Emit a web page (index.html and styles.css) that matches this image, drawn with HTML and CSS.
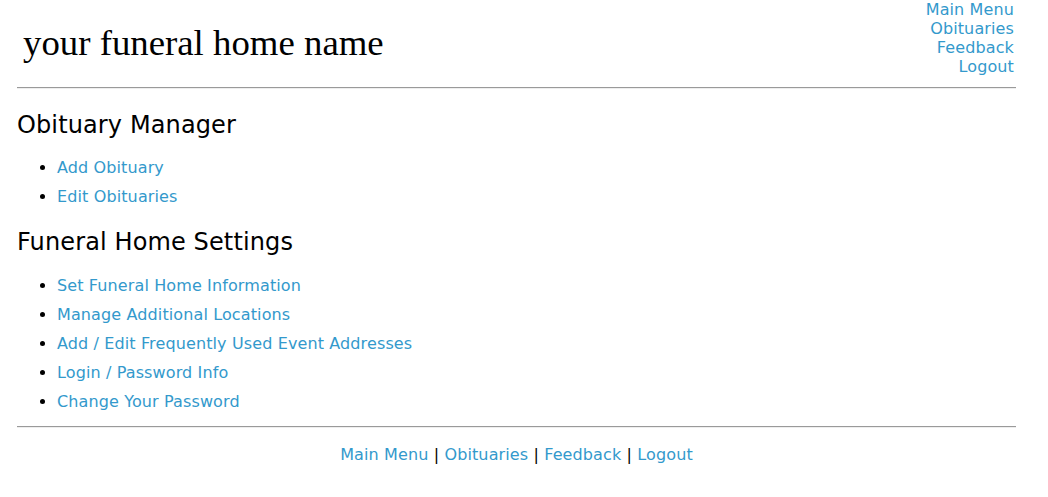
FILE: index.html
```html
<!DOCTYPE html>
<html>
<head>
<meta charset="utf-8">
<title>Obituary Manager</title>
<link rel="stylesheet" href="styles.css">
</head>
<body>
<div class="page">
  <header class="header">
    <div class="brand">your funeral home name</div>
    <nav class="topnav">
      <a href="#">Main Menu</a>
      <a href="#">Obituaries</a>
      <a href="#">Feedback</a>
      <a href="#">Logout</a>
    </nav>
  </header>
  <hr class="rule rule-top">
  <main>
    <h2 class="section-title first">Obituary Manager</h2>
    <ul class="menu first-menu">
      <li><a href="#">Add Obituary</a></li>
      <li><a href="#">Edit Obituaries</a></li>
    </ul>
    <h2 class="section-title second">Funeral Home Settings</h2>
    <ul class="menu second-menu">
      <li><a href="#">Set Funeral Home Information</a></li>
      <li><a href="#">Manage Additional Locations</a></li>
      <li><a href="#">Add / Edit Frequently Used Event Addresses</a></li>
      <li><a href="#">Login / Password Info</a></li>
      <li><a href="#">Change Your Password</a></li>
    </ul>
  </main>
  <hr class="rule rule-bottom">
  <footer class="footer">
    <a href="#">Main Menu</a> | <a href="#">Obituaries</a> | <a href="#">Feedback</a> | <a href="#">Logout</a>
  </footer>
</div>
</body>
</html>
```
FILE: styles.css
```css
html, body {
  margin: 0;
  padding: 0;
  background: #fff;
}
body {
  font-family: "DejaVu Sans", "Liberation Sans", sans-serif;
  font-size: 16px;
  letter-spacing: 0.12px;
  color: #000;
}
a {
  color: #3399cc;
  text-decoration: none;
}
.page {
  width: 999px;
  margin-left: 17px;
}
.header {
  display: flex;
  justify-content: space-between;
  align-items: flex-start;
}
.brand {
  font-family: "Liberation Serif", serif;
  font-size: 36.8px;
  letter-spacing: 0;
  line-height: 40px;
  padding-top: 23px;
  padding-left: 6px;
}
.topnav {
  display: flex;
  flex-direction: column;
  align-items: flex-end;
  line-height: 19px;
  padding-right: 2px;
}
.rule {
  height: 0;
  border: 0;
  border-top: 1px solid #9a9a9a;
  border-bottom: 1px solid #eee;
  margin: 0;
}
.rule-top {
  margin-top: 11px;
}
.section-title {
  font-size: 24px;
  font-weight: normal;
  line-height: 28px;
  margin: 0;
}
.section-title.first {
  margin-top: 22px;
}
.section-title.second {
  margin-top: 17px;
}
.menu {
  margin: 0;
  padding-left: 40px;
  line-height: 29px;
}
.first-menu {
  margin-top: 14px;
}
.second-menu {
  margin-top: 15px;
}
.rule-bottom {
  margin-top: 10px;
}
.footer {
  text-align: center;
  line-height: 19px;
  margin-top: 17px;
}
```
